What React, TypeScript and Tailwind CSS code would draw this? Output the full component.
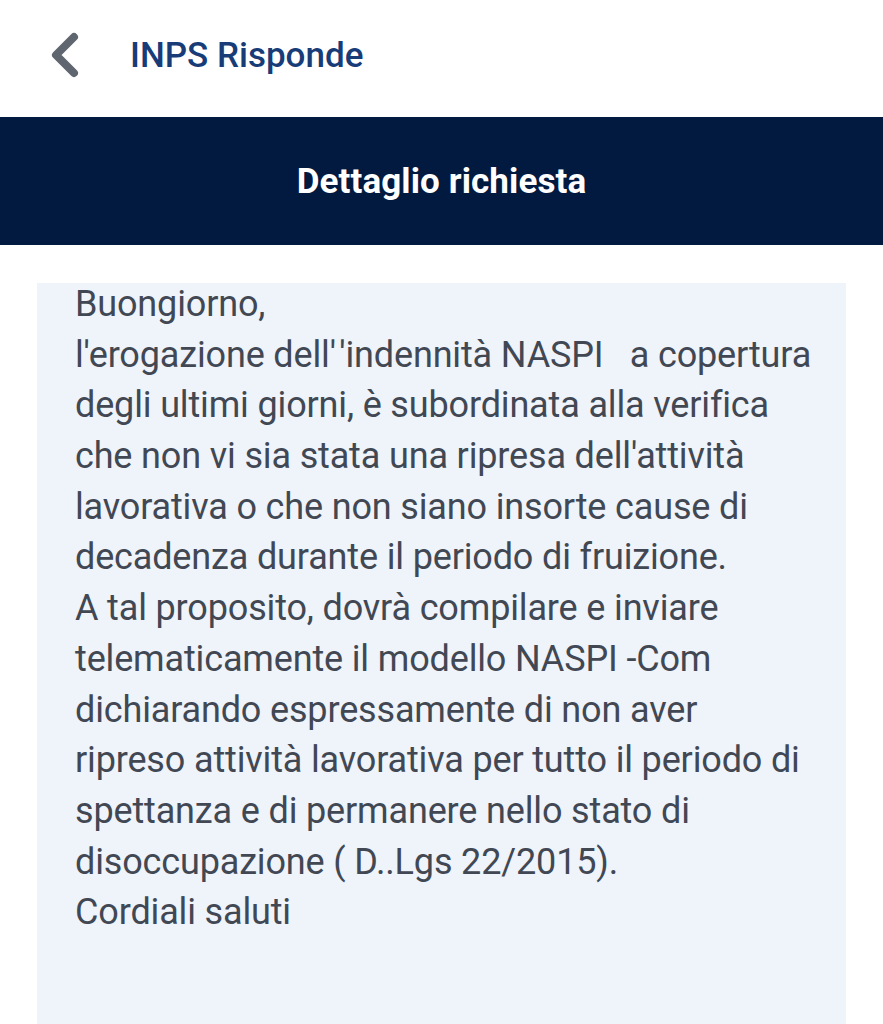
import React from 'react';

const lines = [
  'Buongiorno,',
  "l'erogazione dell'\u200A'indennità NASPI   a copertura",
  'degli ultimi giorni, è subordinata alla verifica',
  "che non vi sia stata una ripresa dell'attività",
  'lavorativa o che non siano insorte cause di',
  'decadenza durante il periodo di fruizione.',
  'A tal proposito, dovrà compilare e inviare',
  'telematicamente il modello NASPI -Com',
  'dichiarando espressamente di non aver',
  'ripreso attività lavorativa per tutto il periodo di',
  'spettanza e di permanere nello stato di',
  'disoccupazione ( D..Lgs 22/2015).',
  'Cordiali saluti',
];

const BackChevron: React.FC = () => (
  <svg width="34" height="48" viewBox="0 0 34 48" fill="none">
    <path d="M26 6 L8 24 L26 42" stroke="#5f6670" strokeWidth="8" strokeLinecap="round" strokeLinejoin="round" />
  </svg>
);

const App: React.FC = () => {
  return (
    <div className="w-[883px] h-[1024px] bg-white overflow-hidden" style={{ fontFamily: 'Roboto, "Noto Sans", sans-serif' }}>
      {/* Top bar */}
      <div className="h-[117px] flex items-center pl-[48px] pb-[8px]">
        <BackChevron />
        <span className="ml-[48px] pt-[3px] text-[35px] font-medium text-[#173c78]">INPS Risponde</span>
      </div>

      {/* Section title */}
      <div className="h-[128px] bg-[#021a3f] flex items-center justify-center pt-[2px]">
        <span className="text-[35px] font-bold text-white tracking-[0.1px]">Dettaglio richiesta</span>
      </div>

      {/* Message body */}
      <div className="pt-[38px] px-[37px]">
        <div className="w-[809px] h-[800px] bg-[#eff3fa] pl-[38px]">
          {lines.map((line, i) => (
            <div key={i} className="h-[50.7px] leading-[42px] text-[36px] text-[#414853] whitespace-pre tracking-[-0.15px]">
              {line}
            </div>
          ))}
        </div>
      </div>
    </div>
  );
};

export default App;
